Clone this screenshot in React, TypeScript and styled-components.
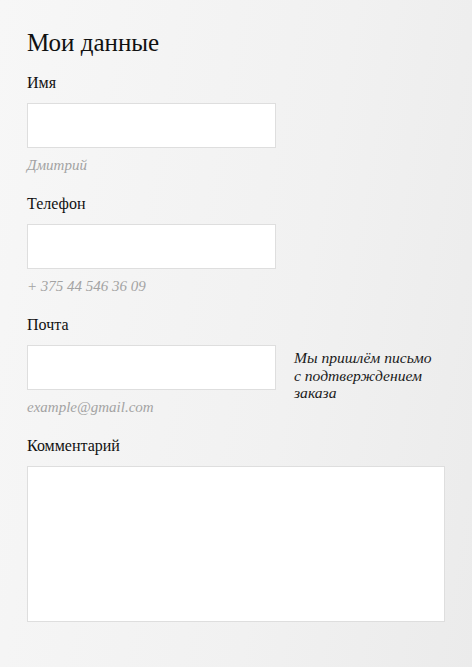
import React from "react";
import styled, { createGlobalStyle } from "styled-components";

const Global = createGlobalStyle`
  html, body { margin: 0; padding: 0; }
  body {
    font-family: "Liberation Serif", "Times New Roman", serif;
    color: #1a1a1a;
  }
  * { box-sizing: border-box; }
`;

const Page = styled.div`
  min-height: 100vh;
  background: linear-gradient(100deg, #f7f7f7 0%, #f1f1f1 60%, #ebebeb 100%);
  padding: 28px 27px 40px 27px;
  display: flex;
  flex-direction: column;
`;

const Title = styled.h1`
  margin: 0 0 15px 0;
  font-size: 25px;
  line-height: 30px;
  font-weight: 400;
  color: #111;
`;

const Field = styled.div`
  display: flex;
  flex-direction: column;
  margin-bottom: 19px;
`;

const Label = styled.label`
  font-size: 16px;
  line-height: 20px;
  color: #111;
  margin-bottom: 10px;
`;

const Row = styled.div`
  display: flex;
  align-items: flex-start;
  gap: 18px;
`;

const Column = styled.div`
  display: flex;
  flex-direction: column;
`;

const Input = styled.input`
  width: 249px;
  height: 45px;
  background: #fff;
  border: 1px solid #dedede;
  border-radius: 0;
  margin: 0;
  padding: 0 12px;
  outline: none;
  font: inherit;
`;

const TextArea = styled.textarea`
  width: 418px;
  height: 156px;
  background: #fff;
  border: 1px solid #dedede;
  border-radius: 0;
  margin: 0;
  padding: 10px 12px;
  resize: none;
  outline: none;
  font: inherit;
`;

const Hint = styled.div`
  margin-top: 7px;
  font-size: 15px;
  line-height: 20px;
  font-style: italic;
  color: #a3a3a3;
`;

const Note = styled.p`
  margin: 4px 0 0 0;
  font-size: 15.6px;
  line-height: 17.5px;
  font-style: italic;
  color: #1a1a1a;
`;

type FieldProps = { id: string; label: string; hint: string; note?: React.ReactNode };

const TextField = ({ id, label, hint, note }: FieldProps) => (
  <Field>
    <Label htmlFor={id}>{label}</Label>
    <Row>
      <Column>
        <Input id={id} />
        <Hint>{hint}</Hint>
      </Column>
      {note && <Note>{note}</Note>}
    </Row>
  </Field>
);

export default function App() {
  return (
    <>
      <Global />
      <Page>
        <Title>Мои данные</Title>
        <TextField id="name" label="Имя" hint="Дмитрий" />
        <TextField id="phone" label="Телефон" hint="+ 375 44 546 36 09" />
        <TextField
          id="email"
          label="Почта"
          hint="example@gmail.com"
          note={
            <>
              Мы пришлём письмо
              <br />с подтверждением
              <br />заказа
            </>
          }
        />
        <Field>
          <Label htmlFor="comment">Комментарий</Label>
          <TextArea id="comment" />
        </Field>
      </Page>
    </>
  );
}
